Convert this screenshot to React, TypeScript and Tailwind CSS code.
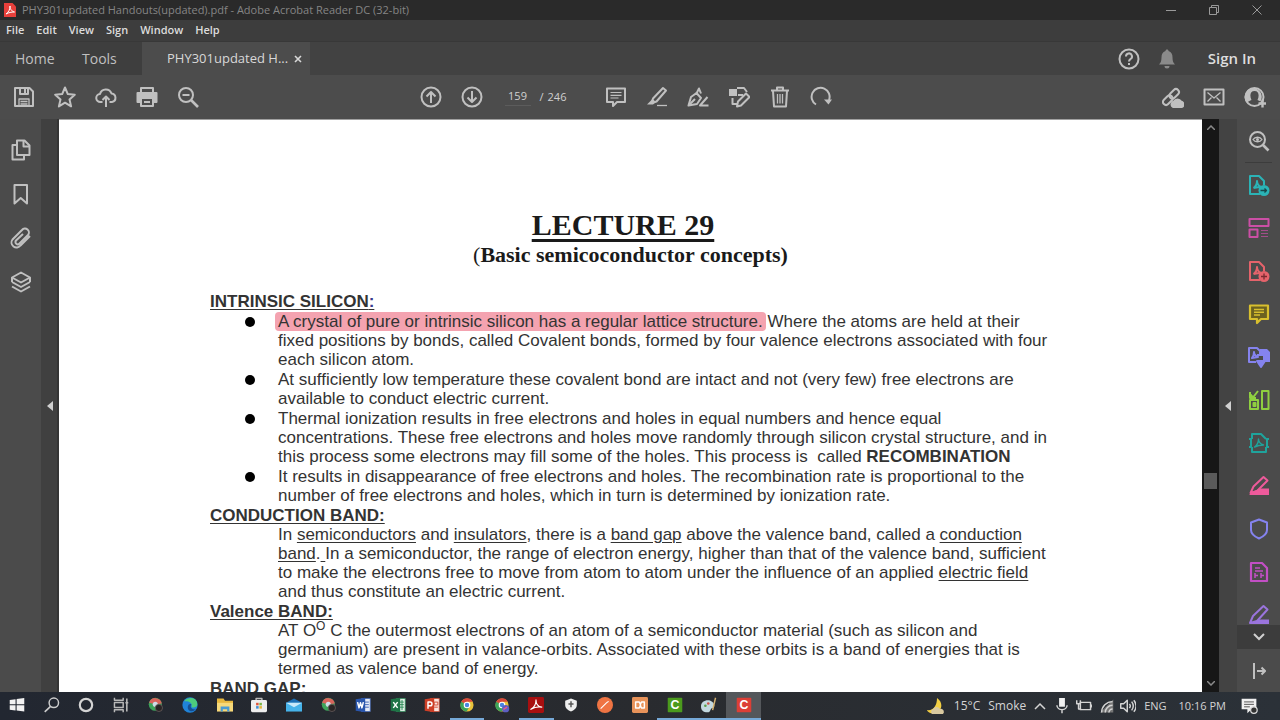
import React from "react";

const Icon = ({ children, size = "size-[22px]" }: { children: React.ReactNode; size?: string }) => (
  <svg
    viewBox="0 0 22 22"
    className={size}
    fill="none"
    stroke="currentColor"
    strokeWidth="2"
    strokeLinejoin="round"
    aria-hidden="true"
  >
    {children}
  </svg>
);

const fileTools = [
  {
    label: "Save",
    icon: (
      <>
        <path d="M2 2h14.500l3.500 3.500V20H2z" />
        <path d="M7 2v6h8V2M12 3v4" />
        <path d="M6 20v-7h10v7M7.500 15.500h7M7.500 18h7" strokeWidth="1.300" />
      </>
    ),
  },
  {
    label: "Star",
    icon: <path d="M11 1.500l2.800 6.600 7 .6-5.300 4.700 1.600 7L11 16.700l-6.100 3.700 1.600-7L1.200 8.700l7-.6z" />,
  },
  {
    label: "Upload",
    icon: (
      <>
        <path d="M7.500 16H5.500A4 4 0 0 1 5 8a6 6 0 0 1 11.500-.5A4.300 4.300 0 0 1 17 16h-2.500" />
        <path d="M11 21V11M7.500 14L11 10.500 14.500 14" />
      </>
    ),
  },
  {
    label: "Print",
    icon: (
      <>
        <path d="M5 6V2h12v4" />
        <path d="M1.500 7h19v9H17v-4H5v4H1.500z" fill="currentColor" />
        <path d="M5 12h12v8H5zM8 16h6" />
      </>
    ),
  },
  {
    label: "Zoom out",
    icon: (
      <>
        <circle cx="9" cy="9" r="7" />
        <path d="M5.500 9h7" />
        <path d="M14 14l7 7" strokeWidth="2.600" />
      </>
    ),
  },
];

const pageTools = [
  {
    label: "Previous page",
    icon: (
      <>
        <circle cx="11" cy="11" r="9.500" />
        <path d="M11 17V6.500M6.500 10.500L11 6l4.500 4.500" />
      </>
    ),
  },
  {
    label: "Next page",
    icon: (
      <>
        <circle cx="11" cy="11" r="9.500" />
        <path d="M11 5v10.500M6.500 11.500L11 16l4.500-4.500" />
      </>
    ),
  },
];

const editTools = [
  {
    label: "Comment",
    icon: (
      <>
        <path d="M2 2.500h18V16h-8l-4 4v-4H2z" />
        <path d="M5.500 6.500h11M5.500 9.300h11M5.500 12h8" strokeWidth="1.200" />
      </>
    ),
  },
  {
    label: "Highlight",
    icon: (
      <>
        <path d="M7 12.500L17 2l3 2.500-9.500 11-5 1.500z" />
        <path d="M6.500 13l3.500 3-3 2.500H1z" fill="currentColor" stroke="none" />
        <path d="M11 19.500h10" strokeWidth="1.300" />
      </>
    ),
  },
  {
    label: "Sign",
    icon: (
      <>
        <path d="M1.500 19.500L4 11l5.500-4 4.500 5-4 6z" />
        <path d="M9.500 7.500L12 2.500l2 5M2 19l6-6" />
        <path d="M20.500 11L13 19.500h8.500" />
      </>
    ),
  },
  {
    label: "Fill",
    icon: (
      <>
        <path d="M1 3h8v7H1z" fill="currentColor" stroke="none" />
        <path d="M9 2h7l3 4M4.500 12v6H9" />
        <path d="M10 15.500L18 7.500l3.500 3.500-8.500 8.500-4 1z" />
        <path d="M10 9h5" />
      </>
    ),
  },
  {
    label: "Delete",
    icon: (
      <>
        <path d="M2 4.500h18M8 4V1.500h6V4M4 5l1 15.500h12L18 5" />
        <path d="M8.500 8v9.500M11 8v9.500M13.500 8v9.500" strokeWidth="1.300" />
      </>
    ),
  },
  {
    label: "Rotate",
    icon: (
      <>
        <path d="M6 18.500A9 9 0 1 1 19 14" />
        <path d="M14 13.500h8l-3.500 5z" fill="currentColor" stroke="none" />
      </>
    ),
  },
];

const shareTools = [
  {
    label: "Share link",
    icon: (
      <>
        <g transform="rotate(-45 9 11)">
          <rect x="-1" y="8" width="11" height="6" rx="3" />
          <rect x="8" y="8" width="11" height="6" rx="3" />
        </g>
        <path d="M11 21a3 3 0 0 1 1-5.500 4 4 0 0 1 7 0A3 3 0 0 1 20 21z" fill="currentColor" />
      </>
    ),
  },
  {
    label: "Email",
    icon: (
      <>
        <path d="M1.500 3.500h19v15h-19z" />
        <path d="M4.500 6.500L11 12l6.500-5.500M4.500 15.500l4-4M17.500 15.500l-4-4" strokeWidth="1.300" />
      </>
    ),
  },
  {
    label: "Add people",
    icon: (
      <>
        <circle cx="10.500" cy="11" r="9" />
        <path
          d="M3 17c1-2 3-2 4.500-3C5.500 10 6 5 10.500 5s5 5 3 9c1 .7 2 1 3 1.500A9 9 0 0 0 10 2 9 9 0 0 0 3 17z"
          fill="currentColor"
          stroke="none"
        />
        <path d="M18.500 13.500v8M14.500 17.500h8" strokeWidth="2.400" />
      </>
    ),
  },
];

const navPanes = [
  {
    label: "Page thumbnails",
    icon: (
      <>
        <path d="M7 1.500h7.500l5 5V16H7z" />
        <path d="M13.500 2v5.500H19" />
        <path d="M7 6H2.500v14.500H14V16" />
      </>
    ),
  },
  { label: "Bookmarks", icon: <path d="M4.500 2h12.500v18.500L10.700 15 4.500 20.500z" /> },
  {
    label: "Attachments",
    icon: (
      <path d="M20 9l-9.500 9.500a5 5 0 0 1-8-6L12 3a3.900 3.900 0 0 1 6 5l-8.500 8.500a2.300 2.300 0 0 1-3.500-3L13 7" />
    ),
  },
  {
    label: "Layers",
    icon: (
      <>
        <path d="M11 1.500l9 5-9 5-9-5z" />
        <path d="M2 11l9 5 9-5M2 15.500l9 5 9-5M2 6.500V11M20 6.500V11" />
      </>
    ),
  },
];

const page = <path d="M12 20H2V2h9l5 5v4M5.500 14c3-2 3.500-5 3.500-7 0 3 2 5 4 6-2 0-5 .5-7.500 1" />;

const tools = [
  {
    label: "Create PDF",
    color: "text-[#2bb3b6]",
    icon: (
      <>
        {page}
        <circle cx="16" cy="16.500" r="5.500" fill="currentColor" stroke="none" />
        <path d="M12.500 16.500h6M16.500 14.500l2 2-2 2" stroke="#17494b" strokeWidth="1.300" />
      </>
    ),
  },
  {
    label: "Edit PDF",
    color: "text-[#cb4fa5]",
    icon: (
      <>
        <path d="M1.500 2h19v7h-19zM1.500 12.500h8v7.500h-8z" />
        <path d="M13 13.500h7M13 16.500h7M13 19.500h7" strokeWidth="1.200" opacity=".7" />
      </>
    ),
  },
  {
    label: "Export PDF",
    color: "text-[#e5636b]",
    icon: (
      <>
        {page}
        <circle cx="16" cy="16.500" r="5.500" fill="currentColor" stroke="none" />
        <path d="M16 13.500v6M13 16.500h6" stroke="#7a2a30" strokeWidth="1.300" />
      </>
    ),
  },
  {
    label: "Comment tool",
    color: "text-[#d8bf2e]",
    icon: (
      <>
        <path d="M2 2.500h18V16h-7l-4 4v-4H2z" fill="#6b6120" strokeWidth="2.200" />
        <path d="M6 6.500h10M6 9.300h10M6 12h6" strokeWidth="1.400" />
      </>
    ),
  },
  {
    label: "Combine files",
    color: "text-[#8583ee]",
    icon: (
      <>
        <path d="M12 3h7l3 3v10h-5V9h-5z" fill="currentColor" stroke="none" />
        <path d="M8 16H1V2h8l3 3v3M4 12c2-2 2-4 2-6 0 3 2 4 4 5zM9 9h7v6" />
        <path d="M9 15h8l-4 6z" fill="currentColor" />
      </>
    ),
  },
  {
    label: "Organize pages",
    color: "text-[#8fd040]",
    icon: (
      <>
        <path d="M14 2h6.500v18H14zM2 11h8v9H2z" />
        <path d="M5.500 14h2v3h-2z" fill="currentColor" />
        <path d="M2 5l3 3.500L10 2M2 3v6h6" />
      </>
    ),
  },
  {
    label: "Compress PDF",
    color: "text-[#1fa39c]",
    icon: (
      <>
        <path d="M4 7V2h9l5 5M4 15v5h14v-5M1 7h2v8H1M21 7h-2v8h2" />
        <path d="M6.500 15c3-2 4-5 4-8 0 3 2 5 5 6-3 0-6 .5-9 2z" strokeWidth="1.400" />
      </>
    ),
  },
  {
    label: "Fill and sign",
    color: "text-[#ee5a9b]",
    icon: (
      <>
        <path d="M2.500 18l3-6.500L15.500 2l4 3.500L9 16z" />
        <path d="M12 13.500h9V20H1l4-3.500z" fill="currentColor" stroke="none" />
      </>
    ),
  },
  {
    label: "Protect",
    color: "text-[#8583ee]",
    icon: <path d="M11 1.500l8 3V12c0 4-3.500 6.500-8 8.500C6.500 18.500 3 16 3 12V4.500z" />,
  },
  {
    label: "Certificates",
    color: "text-[#c24fc4]",
    icon: (
      <>
        <path d="M3 2h11l5 5v13H3z" strokeWidth="2.200" />
        <path d="M7 7h5M7 10h8M7 12v5M7 14.500h3M13 12v5M13 14.500h3" strokeWidth="1.500" />
      </>
    ),
  },
  {
    label: "More tools",
    color: "text-[#9a74dd]",
    icon: (
      <>
        <path d="M2 19l3-7L15.500 2l4 3.500L9 17z" />
        <path d="M11 15.500h10V20H1z" fill="currentColor" stroke="none" />
      </>
    ),
  },
];

const Chrome = () => (
  <>
    <circle cx="11" cy="11" r="9" fill="#e8c23b" stroke="none" />
    <path d="M11 11L3 7a9 9 0 0 1 16-.5H11z" fill="#d9483b" stroke="none" />
    <path d="M11 11L3 6.500A9 9 0 0 0 10.500 20l4-7z" fill="#3da35a" stroke="none" />
    <circle cx="11" cy="11" r="3.800" fill="#4a86e0" stroke="#fff" strokeWidth="1.500" />
  </>
);

const ChromeUser = () => (
  <>
    <circle cx="10" cy="10" r="9" fill="#3da35a" stroke="none" />
    <path d="M1.500 8a9 9 0 0 1 17.500 1L10 10z" fill="#d9645c" stroke="none" />
    <circle cx="10" cy="10" r="3.500" fill="#cfdce8" stroke="none" />
    <circle cx="15" cy="15" r="5" fill="#2a2525" stroke="#6d6262" strokeWidth="1" />
  </>
);

const Letter = ({ fill, text, color = "#fff" }: { fill: string; text: string; color?: string }) => (
  <>
    <rect x="1" y="1" width="20" height="20" rx="1" fill={fill} stroke="none" />
    <text
      x="11"
      y="17"
      textAnchor="middle"
      fontSize="17"
      fontWeight="700"
      fontFamily="Liberation Sans, sans-serif"
      fill={color}
      stroke="none"
    >
      {text}
    </text>
  </>
);

const apps = [
  {
    label: "Start",
    icon: <path d="M1 4l8-1v7H1zM10.500 2.800L21 1.500V10H10.500zM1 11.500h8v7l-8-1zM10.500 11.500H21V20l-10.500-1.300z" fill="#f2f2f2" stroke="none" />,
  },
  {
    label: "Search",
    icon: (
      <>
        <circle cx="13.500" cy="8" r="6.500" stroke="#ccc" />
        <path d="M9 13l-8 7.500" stroke="#ccc" strokeWidth="2.200" />
      </>
    ),
  },
  { label: "Cortana", icon: <circle cx="11" cy="11" r="8.500" stroke="#d4d4d4" strokeWidth="3" /> },
  {
    label: "Task view",
    icon: (
      <>
        <path d="M2 1v3.500h12V1M2 21v-3.500h12V21M2 7.500h12v7H2z" stroke="#b8b8b8" />
        <path d="M19 2v18M17 8h4" stroke="#b8b8b8" strokeWidth="2.200" />
      </>
    ),
  },
  { label: "Chrome profile", icon: <ChromeUser /> },
  {
    label: "Edge",
    icon: (
      <>
        <circle cx="11" cy="11" r="10.500" fill="#2083d8" stroke="none" />
        <path d="M3 6c5-7 18-6 18 4 0 4-4 5-8 4 2-5-3-9-10-8z" fill="#4dcb7c" stroke="none" />
        <path d="M13 10c-3 4 1 8 6 7-5 5-12 2-11-4 .5-3 3-4 5-3z" fill="#164f93" stroke="none" />
      </>
    ),
  },
  {
    label: "File Explorer",
    icon: (
      <>
        <path d="M0 2h9l2 3h11v14H0z" fill="#e8b83e" stroke="none" />
        <path d="M0 8h22v12H0z" fill="#f7d97a" stroke="none" />
        <path d="M5 20v-7h12v7h-3v-3H8v3z" fill="#4a9bd4" stroke="none" />
      </>
    ),
  },
  {
    label: "Store",
    icon: (
      <>
        <path d="M7 5V2h8v3" stroke="#bbb" />
        <rect x="0" y="4" width="22" height="17" rx="2" fill="#eee" stroke="none" />
        <path d="M7 8h3.500v3.500H7z" fill="#e0563a" stroke="none" />
        <path d="M11.500 8H15v3.500h-3.500z" fill="#7ab547" stroke="none" />
        <path d="M7 12.500h3.500V16H7z" fill="#3e8fd6" stroke="none" />
        <path d="M11.500 12.500H15V16h-3.500z" fill="#e7b53a" stroke="none" />
      </>
    ),
  },
  {
    label: "Mail",
    icon: (
      <>
        <path d="M0 8l11-6 11 6v11H0z" fill="#1b6fb5" stroke="none" />
        <path d="M0 8h22v12H0z" fill="#46b3ea" stroke="none" />
        <path d="M0 8h22l-11 6z" fill="#c8e9fa" stroke="none" />
      </>
    ),
  },
  { label: "Chrome profile 2", icon: <ChromeUser /> },
  {
    label: "Word",
    icon: (
      <>
        <rect x="9" y="2" width="12" height="18" fill="#e5ebf6" stroke="#3d63b5" strokeWidth="1" />
        <path d="M13 7h6M13 10.500h6M13 14h6" stroke="#3d63b5" strokeWidth="1.300" />
        <path d="M1 3l13-2v20L1 19z" fill="#2a56ac" stroke="none" />
        <path d="M3.500 7l2 8 2-7 2 7 2-8" stroke="#fff" />
      </>
    ),
  },
  {
    label: "Excel",
    icon: (
      <>
        <rect x="9" y="2" width="12" height="18" fill="#dff0e6" stroke="#2c8a57" strokeWidth="1" />
        <path d="M13 7h6M13 10.500h6M13 14h6M16.500 4v14" stroke="#2c8a57" strokeWidth="1.300" />
        <path d="M1 3l13-2v20L1 19z" fill="#1f7346" stroke="none" />
        <path d="M4.500 7l6 8M10.500 7l-6 8" stroke="#fff" />
      </>
    ),
  },
  {
    label: "PowerPoint",
    icon: (
      <>
        <rect x="9" y="2" width="12" height="18" fill="#fbe3dd" stroke="#d04a32" strokeWidth="1" />
        <path d="M14 7h5v4h-5zM14 14h5" stroke="#d04a32" strokeWidth="1.300" />
        <path d="M1 3l13-2v20L1 19z" fill="#cd3f27" stroke="none" />
        <path d="M5.500 16V7h3a2.500 2.500 0 0 1 0 5h-3" stroke="#fff" />
      </>
    ),
  },
  { label: "Chrome", open: true, icon: <Chrome /> },
  {
    label: "Chrome profile 3",
    icon: (
      <>
        <Chrome />
        <circle cx="16" cy="16" r="5" fill="#5d5fc4" stroke="none" />
        <path d="M13 17l5-3" stroke="#e85c8a" />
      </>
    ),
  },
  {
    label: "Acrobat Reader",
    open: true,
    icon: (
      <>
        <rect x="0" y="0" width="22" height="22" rx="2" fill="#a80f10" stroke="none" />
        <path d="M4 17c5-3 7-8 7-13 0 5 3 9 8 10-5-1-10 0-15 3z" stroke="#fff" strokeWidth="1.600" />
      </>
    ),
  },
  {
    label: "Security",
    icon: (
      <>
        <path d="M11 2l8 3v6c0 5-4 7-8 9-4-2-8-4-8-9V5z" fill="#eee" stroke="none" />
        <path d="M11 6v8M7.500 9.500h7" stroke="#555" />
      </>
    ),
  },
  {
    label: "Postman",
    icon: (
      <>
        <circle cx="11" cy="11" r="11" fill="#ef7443" stroke="none" />
        <path d="M5 16l8-8M13 8l3-2" stroke="#fff" strokeWidth="1.500" />
      </>
    ),
  },
  {
    label: "XAMPP",
    icon: (
      <>
        <rect x="0" y="0" width="22" height="22" rx="2" fill="#e8935a" stroke="none" />
        <path d="M5 7h5l2 4-2 4H5zM17 7h-4l-2 4 2 4h4z" stroke="#fff" />
      </>
    ),
  },
  { label: "Camtasia", open: true, icon: <Letter fill="#4b9a1d" text="C" /> },
  {
    label: "Paint",
    open: true,
    icon: (
      <>
        <path d="M0 13c0-7 7-10 13-8 7 3 6 10 3 10-4 0-2 6-7 6-6 0-9-3-9-8z" fill="#c3d8df" stroke="none" />
        <circle cx="6" cy="12" r="1.800" fill="#5b9e4a" stroke="none" />
        <circle cx="10" cy="9" r="1.800" fill="#cf5247" stroke="none" />
        <path d="M16 18l4-17" stroke="#d6b270" />
      </>
    ),
  },
  { label: "Camtasia Recorder", open: true, active: true, icon: <Letter fill="#dc3f36" text="C" /> },
];

const Line = ({ children }: { children: React.ReactNode }) => <span className="block">{children}</span>;

const DocLink = ({ children }: { children: React.ReactNode }) => (
  <a href="#" className="underline underline-offset-2">
    {children}
  </a>
);

const Heading = ({ children }: { children: React.ReactNode }) => (
  <h2 className="mt-px font-bold underline underline-offset-2">{children}</h2>
);

const Bullet = ({ children }: { children: React.ReactNode }) => (
  <li className="mt-px flex">
    <span className="mt-[5px] mr-[23px] ml-[35px] size-[10px] shrink-0 rounded-full bg-black" />
    <div>{children}</div>
  </li>
);

const ToolButton = ({ label, children }: { label: string; children: React.ReactNode }) => (
  <button aria-label={label} className="flex w-[41px] justify-center text-[#c0c0c0]">
    {children}
  </button>
);

const TitleBar = () => (
  <header className="flex h-5 shrink-0 items-center bg-[#2a2a2a] text-[11px] text-[#858585]">
    <svg viewBox="0 0 12 14" className="mr-[6px] ml-1 h-[14px] w-3" aria-hidden="true">
      <path d="M0 0h8.500L12 3.500V14H0z" fill="#e8403b" />
      <path d="M2 11c3-2 4-5 4-8 0 4 2 5 4.500 6C7 9 5 9.500 2 11z" fill="none" stroke="#fff" />
    </svg>
    <h1 className="flex-1 whitespace-nowrap">PHY301updated Handouts(updated).pdf - Adobe Acrobat Reader DC (32-bit)</h1>
    <div className="flex pr-[2px] text-[#9a9a9a]">
      <button aria-label="Minimize" className="flex w-[43px] justify-center">
        <svg viewBox="0 0 10 10" className="size-[10px]" stroke="currentColor">
          <path d="M0 5.500h10" />
        </svg>
      </button>
      <button aria-label="Restore" className="flex w-[43px] justify-center">
        <svg viewBox="0 0 10 10" className="size-[10px]" fill="none" stroke="currentColor">
          <path d="M.5 2.500h7v7h-7zM2.500 2.500v-2h7v7h-2" />
        </svg>
      </button>
      <button aria-label="Close" className="flex w-[43px] justify-center">
        <svg viewBox="0 0 10 10" className="size-[10px]" stroke="currentColor">
          <path d="M.5.5l9 9M9.500.5l-9 9" />
        </svg>
      </button>
    </div>
  </header>
);

const TabBar = () => (
  <div className="flex h-[34px] shrink-0 items-stretch border-t border-[#383838] bg-[#424242] text-sm text-[#c0c0c0]">
    <div className="flex w-[142px] bg-[#3e3e3e] pl-[15px]">
      <button className="w-[67px] text-left">Home</button>
      <button>Tools</button>
    </div>
    <div className="flex w-[168px] items-center justify-between bg-[#4c4c4c] pr-2 pl-[25px] text-[13px] text-[#d8d8d8]">
      <button>PHY301updated H...</button>
      <button aria-label="Close tab">
        <svg viewBox="0 0 8 8" className="size-2" stroke="currentColor" strokeWidth="1.600">
          <path d="M1 1l6 6M7 1L1 7" />
        </svg>
      </button>
    </div>
    <div className="flex flex-1 items-center justify-end pr-6">
      <button aria-label="Help" className="mr-4">
        <Icon>
          <circle cx="11" cy="11" r="9.500" />
          <path d="M8 8.500a3 3 0 1 1 4.500 2.500c-1 .7-1.500 1-1.500 2.500M11 15v2" />
        </Icon>
      </button>
      <button aria-label="Notifications" className="mr-[30px] text-[#8a8a8a]">
        <Icon>
          <path
            d="M11 1.500c1 0 1.500.7 1.500 1.500 3 .8 4 3.500 4 6.500 0 4 1 5.500 2.500 7H3c1.500-1.500 2.500-3 2.500-7 0-3 1-5.700 4-6.500 0-.8.5-1.500 1.500-1.500zM8.500 18h5a2.500 2.500 0 0 1-5 0z"
            fill="currentColor"
            stroke="none"
          />
        </Icon>
      </button>
      <button className="text-[15px] font-semibold text-[#dedede]">Sign In</button>
    </div>
  </div>
);

const Toolbar = () => (
  <div className="flex h-11 shrink-0 items-center bg-[#4c4c4c] pr-[5px] pl-[3px]">
    <div className="flex flex-1">
      {fileTools.map((t) => (
        <ToolButton key={t.label} label={t.label}>
          <Icon>{t.icon}</Icon>
        </ToolButton>
      ))}
    </div>
    <div className="mr-[26px] flex items-center">
      {pageTools.map((t) => (
        <ToolButton key={t.label} label={t.label}>
          <Icon>{t.icon}</Icon>
        </ToolButton>
      ))}
      <div className="flex w-[103px] items-center pl-3 text-[11px] text-[#d0d0d0]">
        <input
          aria-label="Page number"
          defaultValue="159"
          className="mr-[9px] w-[26px] border-b border-[#5c5c5c] bg-transparent text-center"
        />
        <span className="mr-1">/</span>
        <span>246</span>
      </div>
      {editTools.map((t) => (
        <ToolButton key={t.label} label={t.label}>
          <Icon>{t.icon}</Icon>
        </ToolButton>
      ))}
    </div>
    <div className="flex flex-1 justify-end">
      {shareTools.map((t) => (
        <ToolButton key={t.label} label={t.label}>
          <Icon>{t.icon}</Icon>
        </ToolButton>
      ))}
    </div>
  </div>
);

const Handout = () => (
  <article className="mx-auto w-[841px] pt-[88px] font-['Liberation_Sans',Arial,sans-serif] text-[17px] leading-[19px] whitespace-nowrap text-[#333]">
    <div className="mb-6 text-center font-['Liberation_Serif','Times_New_Roman',serif] font-bold text-[#1a1a1a]">
      <h2 className="text-[30px] leading-[34px]">
        <span className="underline decoration-[3px] underline-offset-4">LECTURE 29</span>
        {"\u00a0\u00a0"}
      </h2>
      <p className="text-[22px] leading-[26px]">
        <span className="font-normal">(</span>Basic semicoconductor concepts)
      </p>
    </div>
    <Heading>
      INTRINSIC SILICON<span className="text-[#3a3a8c]">:</span>
    </Heading>
    <ul>
      <Bullet>
        <Line>
          <mark className="-mx-[3px] rounded-sm bg-[#f4a3b0] px-[3px] text-inherit">
            A crystal of pure or intrinsic silicon has a regular lattice structure.
          </mark>{" "}
          Where the atoms are held at their
        </Line>
        <Line>fixed positions by bonds, called Covalent bonds, formed by four valence electrons associated with four</Line>
        <Line>each silicon atom.</Line>
      </Bullet>
      <Bullet>
        <Line>At sufficiently low temperature these covalent bond are intact and not (very few) free electrons are</Line>
        <Line>available to conduct electric current.</Line>
      </Bullet>
      <Bullet>
        <Line>Thermal ionization results in free electrons and holes in equal numbers and hence equal</Line>
        <Line>concentrations. These free electrons and holes move randomly through silicon crystal structure, and in</Line>
        <Line>
          this process some electrons may fill some of the holes. This process is&nbsp; called <b>RECOMBINATION</b>
        </Line>
      </Bullet>
      <Bullet>
        <Line>It results in disappearance of free electrons and holes. The recombination rate is proportional to the</Line>
        <Line>number of free electrons and holes, which in turn is determined by ionization rate.</Line>
      </Bullet>
    </ul>
    <Heading>CONDUCTION BAND:</Heading>
    <p className="pl-[68px]">
      <Line>
        In <DocLink>semiconductors</DocLink> and <DocLink>insulators</DocLink>, there is a <DocLink>band gap</DocLink>{" "}
        above the valence band, called a <DocLink>conduction</DocLink>
      </Line>
      <Line>
        <DocLink>band</DocLink>.<u className="underline-offset-2">&nbsp;</u>In a semiconductor, the range of electron
        energy, higher than that of the valence band, sufficient
      </Line>
      <Line>
        to make the electrons free to move from atom to atom under the influence of an applied{" "}
        <DocLink>electric field</DocLink>
      </Line>
      <Line>and thus constitute an electric current.</Line>
    </p>
    <Heading>Valence BAND:</Heading>
    <p className="pl-[68px]">
      <Line>
        AT O<sup className="text-[12px] leading-none">O</sup> C the outermost electrons of an atom of a semiconductor
        material (such as silicon and
      </Line>
      <Line>germanium) are present in valance-orbits. Associated with these orbits is a band of energies that is</Line>
      <Line>termed as valence band of energy.</Line>
    </p>
    <Heading>BAND GAP:</Heading>
  </article>
);

const Workspace = () => (
  <div className="flex min-h-0 flex-1">
    <nav className="flex w-[41px] shrink-0 flex-col bg-[#4b4b4b] pt-[9px] text-[#c0c0c0]">
      {navPanes.map((p) => (
        <button key={p.label} aria-label={p.label} className="flex h-11 items-center pl-[10px]">
          <Icon>{p.icon}</Icon>
        </button>
      ))}
    </nav>
    <button
      aria-label="Show navigation pane"
      className="flex w-[18px] shrink-0 items-center justify-end border-r-2 border-[#353535] bg-[#404040] pr-1 text-[#d0d0d0]"
    >
      <svg viewBox="0 0 6 10" className="h-[10px] w-[6px]" fill="currentColor">
        <path d="M6 0v10L0 5z" />
      </svg>
    </button>
    <main className="min-w-0 flex-1 overflow-hidden border-t border-[#a0a0a0] bg-white">
      <Handout />
    </main>
    <div className="flex w-[17px] shrink-0 flex-col items-center justify-between bg-[#171717] py-[6px] text-[#8a8a8a]">
      <svg viewBox="0 0 8 5" className="h-[5px] w-2" fill="none" stroke="currentColor" strokeWidth="1.500">
        <path d="M0 5l4-4 4 4" />
      </svg>
      <div className="mt-[150px] h-4 w-[13px] bg-[#5a5a5a]" />
      <svg viewBox="0 0 8 5" className="h-[5px] w-2" fill="none" stroke="currentColor" strokeWidth="1.500">
        <path d="M0 0l4 4 4-4" />
      </svg>
    </div>
    <button
      aria-label="Hide tools pane"
      className="flex w-[18px] shrink-0 items-center justify-center bg-[#434343] text-[#d0d0d0]"
    >
      <svg viewBox="0 0 6 10" className="h-[10px] w-[6px]" fill="currentColor">
        <path d="M6 0v10L0 5z" />
      </svg>
    </button>
    <aside className="flex w-[43px] shrink-0 flex-col bg-[#4b4b4b]">
      <div className="flex min-h-0 flex-1 flex-col overflow-hidden">
        <button aria-label="Find tools" className="flex h-[43px] shrink-0 items-center justify-center text-[#c0c0c0]">
          <Icon>
            <circle cx="9.500" cy="9.500" r="7.500" />
            <path d="M5 9.500c2-3 7-3 9 0-2 3-7 3-9 0z" strokeWidth="1.300" />
            <circle cx="9.500" cy="9.500" r="1.500" fill="currentColor" stroke="none" />
            <path d="M15 15l5.500 5.500" strokeWidth="2.600" />
          </Icon>
        </button>
        <hr className="mx-2 border-[#3c3c3c]" />
        {tools.map((t) => (
          <button key={t.label} aria-label={t.label} className="flex h-[43px] shrink-0 items-center justify-center">
            <span className={t.color}>
              <Icon>{t.icon}</Icon>
            </span>
          </button>
        ))}
      </div>
      <button aria-label="Scroll tools" className="flex h-6 items-center justify-center bg-[#3c3c3c] text-[#d0d0d0]">
        <svg viewBox="0 0 12 8" className="h-2 w-3" fill="none" stroke="currentColor" strokeWidth="2">
          <path d="M1 1l5 5 5-5" />
        </svg>
      </button>
      <button aria-label="Collapse tools" className="flex h-[43px] items-center justify-center text-[#c0c0c0]">
        <svg viewBox="0 0 14 16" className="h-4 w-[14px]" fill="none" stroke="currentColor" strokeWidth="2">
          <path d="M2 0v16M5 8h8M9.500 4.500L13 8l-3.500 3.500" />
        </svg>
      </button>
    </aside>
  </div>
);

const Taskbar = () => (
  <footer className="flex h-7 shrink-0 justify-between bg-linear-to-r from-[#222731] via-[#292b2f] to-[#2b3138] text-xs text-[#d4d4d4]">
    <div className="flex w-[761px]">
      {apps.map((a) => (
        <button
          key={a.label}
          aria-label={a.label}
          className={`flex flex-1 items-center justify-center border-b-2 ${a.open ? "border-[#76a9d8]" : "border-transparent"} ${
            a.active ? "bg-[#54575b]" : ""
          }`}
        >
          <Icon size="size-4">{a.icon}</Icon>
        </button>
      ))}
    </div>
    <div className="flex items-center pr-[22px] whitespace-nowrap">
      <button className="mr-2 flex items-center">
        <svg viewBox="0 0 20 16" className="mr-2 h-4 w-5" aria-hidden="true">
          <path d="M11 0c6 4 6 12-1 15-4 1-8 0-9-3 6 1 10-4 10-12z" fill="#f3cf43" />
          <path d="M6 16a3 3 0 0 1 1-5 4 4 0 0 1 7 0 3 3 0 0 1 3 5z" fill="#d9c9a0" />
        </svg>
        <span className="mr-2">15°C</span>
        <span>Smoke</span>
      </button>
      <button aria-label="Hidden icons" className="mr-2">
        <svg viewBox="0 0 12 8" className="h-2 w-3" fill="none" stroke="currentColor" strokeWidth="1.500">
          <path d="M1 7l5-5 5 5" />
        </svg>
      </button>
      <div className="mr-2 flex items-center gap-[6px]">
        <Icon size="size-4">
          <path d="M7 0h8v12H7z" fill="#f0f0f0" stroke="none" />
          <path d="M4 10c0 8 14 8 14 0M11 16v5" />
        </Icon>
        <Icon size="size-4">
          <path d="M6 6h14v10H6zM21.500 9v4" />
          <path d="M1 3v5h5V3M3.500 8v7H7" />
        </Icon>
        <Icon size="size-4">
          <path d="M21 2v18H3z" fill="#777" stroke="none" />
          <path d="M5 20A15 15 0 0 1 20 5M10 20a10 10 0 0 1 10-10M15 20a5 5 0 0 1 5-5" />
        </Icon>
        <Icon size="size-4">
          <path d="M1 8h4l5-5v16l-5-5H1z" />
          <path d="M13 8c1.500 2 1.500 4 0 6M16 5c3 4 3 8 0 12M19 3c4 5 4 11 0 16" />
        </Icon>
      </div>
      <span className="mr-3 text-[11px]">ENG</span>
      <span className="mr-[14px] text-[11px]">10:16 PM</span>
      <button aria-label="Notification center">
        <Icon size="size-[18px]">
          <path d="M2 2h18v13h-6l-5 5v-5H2z" fill="#f0f0f0" stroke="none" />
          <path d="M5 6h12M5 9h12M5 12h7" stroke="#555" strokeWidth="1.200" />
          <circle cx="17" cy="16" r="4" fill="#333" stroke="#ddd" strokeWidth="1.500" />
        </Icon>
      </button>
    </div>
  </footer>
);

const App = () => {
  return (
    <div className="flex h-screen flex-col overflow-hidden bg-[#404040] font-['Open_Sans','Segoe_UI',sans-serif]">
      <TitleBar />
      <nav className="flex h-[21px] shrink-0 items-center gap-3 bg-[#3d3d3d] pl-[6px] text-[11px] font-semibold text-[#dcdcdc]">
        <button>File</button>
        <button>Edit</button>
        <button>View</button>
        <button>Sign</button>
        <button>Window</button>
        <button>Help</button>
      </nav>
      <TabBar />
      <Toolbar />
      <Workspace />
      <Taskbar />
    </div>
  );
};

export default App;
